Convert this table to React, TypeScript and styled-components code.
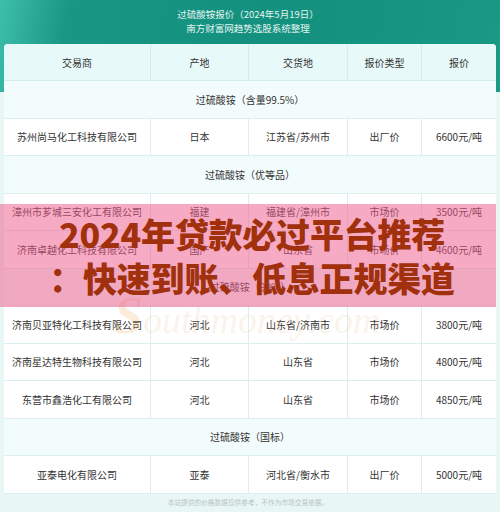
import React from "react";
import styled, { createGlobalStyle } from "styled-components";

const GlobalStyle = createGlobalStyle`
  html, body { margin: 0; padding: 0; }
  body {
    background: #e8f7f5;
    font-family: "Noto Sans CJK SC", "Noto Sans", sans-serif;
  }
`;

const Page = styled.div`
  position: relative;
  width: 500px;
  height: 512px;
  overflow: hidden;
  background:
    linear-gradient(to bottom, transparent 0, transparent 92px, #e8f7f5 92px),
    linear-gradient(100deg, #3dbfab 0%, #1a9684 12%, #13907e 45%, #179683 75%, #1c9c89 100%);
`;

const Title = styled.div`
  height: 44px;
  box-sizing: border-box;
  padding-top: 7px;
  text-align: center;
  color: #e3f5f1;
  font-size: 9.5px;
  line-height: 14px;
  padding-right: 4px;
`;

const Card = styled.div`
  margin: 0 4px 0 4px;
  border-radius: 4px 4px 0 0;
  overflow: hidden;
  background: #ffffff;
`;

const Grid = styled.div`
  display: grid;
  grid-template-columns: 147px 98px 99px 74px 1fr;
`;

const HeadCell = styled.div<{ $last?: boolean }>`
  height: 37px;
  box-sizing: border-box;
  display: flex;
  align-items: center;
  justify-content: center;
  background: #e7f9f9;
  color: #333;
  font-size: 10px;
  border-bottom: 1px solid #d3ecec;
  border-right: ${(p) => (p.$last ? "none" : "1px solid #d3ecec")};
`;

const GroupCell = styled.div`
  grid-column: 1 / -1;
  height: 37.5px;
  box-sizing: border-box;
  display: flex;
  align-items: center;
  justify-content: center;
  background: #f3fcfc;
  color: #333;
  font-size: 10px;
  border-bottom: 1px solid #dcefef;
`;

const Cell = styled.div<{ $last?: boolean }>`
  height: 37.5px;
  box-sizing: border-box;
  display: flex;
  align-items: center;
  justify-content: center;
  background: #ffffff;
  color: #333;
  font-size: 10px;
  white-space: nowrap;
  border-bottom: 1px solid #dcefef;
  border-right: ${(p) => (p.$last ? "none" : "1px solid #dcefef")};
`;

const Footer = styled.div`
  text-align: center;
  color: #b9c4c2;
  font-size: 6.7px;
  line-height: 14px;
  padding-top: 1px;
  padding-right: 4px;
`;

const Banner = styled.div`
  position: absolute;
  left: 0;
  top: 204px;
  width: 496px;
  height: 103px;
  background: rgba(240, 92, 140, 0.52);
  display: flex;
  flex-direction: column;
  align-items: center;
  justify-content: center;
  padding-left: 8px;
  box-sizing: border-box;
`;

const BannerLine = styled.div`
  color: #a1300d;
  font-size: 34px;
  font-weight: 900;
  line-height: 44px;
  white-space: nowrap;
  letter-spacing: -0.2px;
`;

const Watermark = styled.div`
  position: absolute;
  left: 114px;
  top: 286px;
  font-family: "Liberation Serif", serif;
  font-style: italic;
  font-size: 38px;
  color: rgba(232, 196, 150, 0.2);
  white-space: nowrap;
  pointer-events: none;
`;

const WatermarkS = styled.span`
  font-size: 52px;
  font-weight: bold;
  color: rgba(240, 170, 90, 0.22);
`;

type Row = [string, string, string, string, string];
type Group = { label: string; rows: Row[] };

const headers = ["交易商", "产地", "交货地", "报价类型", "报价"];

const groups: Group[] = [
  {
    label: "过硫酸铵（含量99.5%）",
    rows: [["苏州尚马化工科技有限公司", "日本", "江苏省/苏州市", "出厂价", "6600元/吨"]],
  },
  {
    label: "过硫酸铵（优等品）",
    rows: [
      ["漳州市芗城三安化工有限公司", "福建", "福建省/漳州市", "市场价", "3500元/吨"],
      ["济南卓越化工科技有限公司", "国产", "山东省", "市场价", "4600元/吨"],
    ],
  },
  {
    label: "过硫酸铵（99%）",
    rows: [
      ["济南贝亚特化工科技有限公司", "河北", "山东省/济南市", "市场价", "3800元/吨"],
      ["济南星达特生物科技有限公司", "河北", "山东省", "市场价", "4800元/吨"],
      ["东营市鑫浩化工有限公司", "河北", "山东省", "市场价", "4850元/吨"],
    ],
  },
  {
    label: "过硫酸铵（国标）",
    rows: [["亚泰电化有限公司", "亚泰", "河北省/衡水市", "出厂价", "5000元/吨"]],
  },
];

export default function App() {
  return (
    <>
      <GlobalStyle />
      <Page>
        <Title>
          <div>过硫酸铵报价（2024年5月19日）</div>
          <div>南方财富网趋势选股系统整理</div>
        </Title>
        <Card>
          <Grid>
            {headers.map((h, i) => (
              <HeadCell key={h} $last={i === headers.length - 1}>
                {h}
              </HeadCell>
            ))}
            {groups.map((g) => (
              <React.Fragment key={g.label}>
                <GroupCell>{g.label}</GroupCell>
                {g.rows.map((r) =>
                  r.map((c, i) => (
                    <Cell key={r[0] + i} $last={i === r.length - 1}>
                      {c}
                    </Cell>
                  ))
                )}
              </React.Fragment>
            ))}
          </Grid>
        </Card>
        <Footer>本站提供的价格数据仅供参考，不作为市场交易依据。</Footer>
        <Watermark>
          <WatermarkS>S</WatermarkS>outhmoney.com
        </Watermark>
        <Banner>
          <BannerLine>2024年贷款必过平台推荐</BannerLine>
          <BannerLine>：快速到账、低息正规渠道</BannerLine>
        </Banner>
      </Page>
    </>
  );
}
